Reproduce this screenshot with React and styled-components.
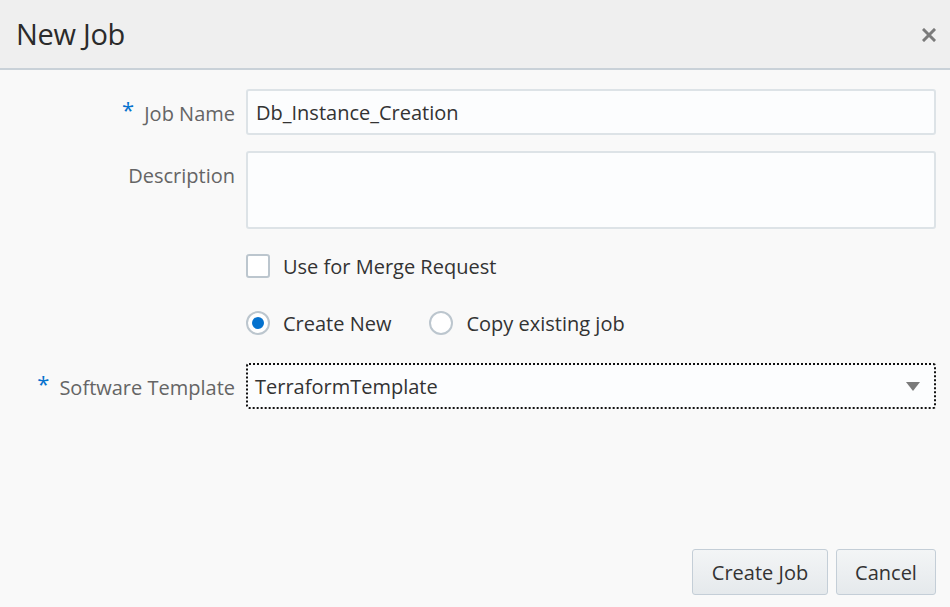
import React from "react";
import styled, { createGlobalStyle } from "styled-components";

const Global = createGlobalStyle`
  html, body { margin: 0; padding: 0; }
  body { font-family: "Open Sans", "Noto Sans", sans-serif; background: #f9f9f9; }
  * { box-sizing: border-box; }
`;

const Dialog = styled.div`
  width: 950px;
  height: 607px;
  display: flex;
  flex-direction: column;
  background: #f9f9f9;
  overflow: hidden;
`;

const Header = styled.div`
  height: 70px;
  flex: none;
  display: flex;
  align-items: center;
  justify-content: space-between;
  padding: 0 13px 2px 16px;
  background: #efefef;
  border-bottom: 2px solid #c9d1d8;
`;

const Title = styled.h1`
  margin: 0;
  font-weight: 400;
  font-size: 29px;
  color: #2b2b2b;
  letter-spacing: -0.3px;
`;

const CloseBtn = styled.button`
  border: 0;
  background: none;
  padding: 0;
  width: 16px;
  height: 16px;
  display: flex;
  align-items: center;
  justify-content: center;
  cursor: pointer;
  margin-top: 3px;
`;

const Body = styled.div`
  flex: 1;
  display: flex;
  flex-direction: column;
  padding: 19px 14px 0 0;
`;

const Row = styled.div`
  display: grid;
  grid-template-columns: 235px 1fr;
  column-gap: 11px;
  align-items: ${(p) => (p.$top ? "start" : "center")};
  margin-top: ${(p) => p.$mt || 0}px;
`;

const Label = styled.label`
  text-align: right;
  font-size: 20px;
  color: #656565;
  white-space: nowrap;
  padding-top: ${(p) => p.$pt || 0}px;
`;

const Req = styled.span`
  color: #0572ce;
  font-size: 22px;
  margin-right: 10px;
  position: relative;
  top: -3px;
`;

const Field = styled.div`
  height: ${(p) => p.$h}px;
  background: #fcfdfe;
  border: ${(p) => (p.$focus ? "2px dotted #111" : "2px solid #dde3e7")};
  border-radius: 3px;
  display: flex;
  align-items: center;
  justify-content: space-between;
  padding: 0 14px 0 ${(p) => (p.$focus ? 7 : 8)}px;
  font-size: 20px;
  color: #333;
`;

const Check = styled.span`
  width: 24px;
  height: 24px;
  border: 2px solid #bcc6ce;
  border-radius: 3px;
  background: #fff;
  flex: none;
`;

const Radio = styled.span`
  width: 24px;
  height: 24px;
  border: 2px solid #bcc6ce;
  border-radius: 50%;
  background: #fff;
  flex: none;
  display: flex;
  align-items: center;
  justify-content: center;
  &::after {
    content: "";
    width: 12px;
    height: 12px;
    border-radius: 50%;
    background: ${(p) => (p.$on ? "#0572ce" : "transparent")};
  }
`;

const Options = styled.div`
  display: flex;
  align-items: center;
  gap: 38px;
`;

const Option = styled.div`
  display: flex;
  align-items: center;
  gap: 13px;
  font-size: 20px;
  color: #333;
  height: 24px;
`;

const Footer = styled.div`
  margin-top: auto;
  display: flex;
  justify-content: flex-end;
  gap: 8px;
  padding: 0 14px 12px 0;
`;

const Button = styled.button`
  height: 46px;
  width: ${(p) => p.$w}px;
  border: 1px solid #c4ced7;
  border-radius: 3px;
  background: linear-gradient(#f3f5f6, #e5e9ec);
  font-family: inherit;
  font-size: 20px;
  color: #333;
  padding: 0;
  cursor: pointer;
`;

export default function App() {
  return (
    <>
      <Global />
      <Dialog>
        <Header>
          <Title>New Job</Title>
          <CloseBtn aria-label="Close">
            <svg width="14" height="14" viewBox="0 0 14 14">
              <path d="M2 2 L12 12 M12 2 L2 12" stroke="#7a7a7a" strokeWidth="3" strokeLinecap="square" />
            </svg>
          </CloseBtn>
        </Header>
        <Body>
          <Row>
            <Label><Req>*</Req>Job Name</Label>
            <Field $h={46}>Db_Instance_Creation</Field>
          </Row>
          <Row $top $mt={16}>
            <Label $pt={11}>Description</Label>
            <Field $h={78} />
          </Row>
          <Row $mt={25}>
            <span />
            <Options>
              <Option><Check />Use for Merge Request</Option>
            </Options>
          </Row>
          <Row $mt={33}>
            <span />
            <Options>
              <Option><Radio $on />Create New</Option>
              <Option><Radio />Copy existing job</Option>
            </Options>
          </Row>
          <Row $mt={28}>
            <Label><Req>*</Req>Software Template</Label>
            <Field $h={46} $focus>
              TerraformTemplate
              <svg width="14" height="9" viewBox="0 0 14 9">
                <path d="M0 0 H14 L7 9 Z" fill="#7a7a7a" />
              </svg>
            </Field>
          </Row>
        </Body>
        <Footer>
          <Button $w={136}>Create Job</Button>
          <Button $w={100}>Cancel</Button>
        </Footer>
      </Dialog>
    </>
  );
}
